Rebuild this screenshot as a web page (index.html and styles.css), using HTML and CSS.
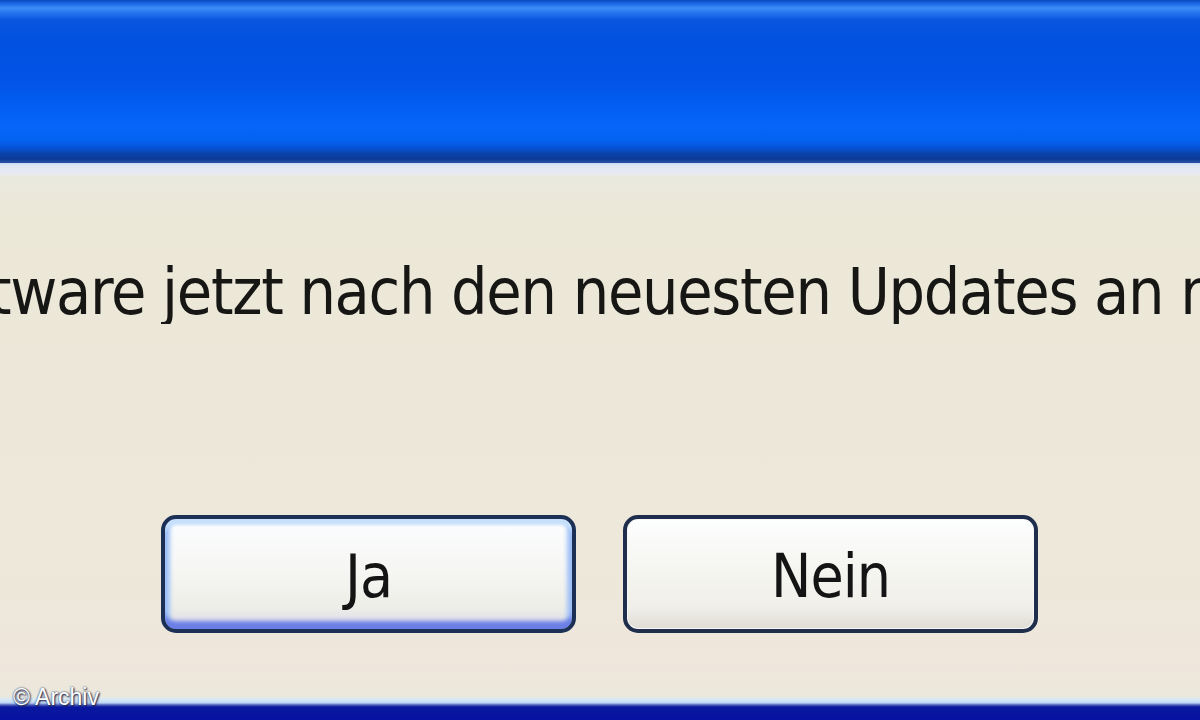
FILE: index.html
```html
<!DOCTYPE html>
<html lang="de">
<head>
<meta charset="utf-8">
<title>Dialog</title>
<link rel="stylesheet" href="styles.css">
</head>
<body>
<div class="window">
  <div class="titlebar"></div>
  <div class="content">
    <div class="message"><span class="msg-text">Software jetzt nach den neuesten Updates an meinem Computer suchen?</span></div>
    <div class="buttons">
      <button class="btn btn-default">Ja</button>
      <button class="btn">Nein</button>
    </div>
  </div>
  <div class="frame-bottom"></div>
  <div class="credit">© Archiv</div>
</div>
</body>
</html>
```

FILE: styles.css
```css
html, body {
  margin: 0;
  padding: 0;
  width: 1200px;
  height: 720px;
  overflow: hidden;
  background: #ede8da;
}

.window {
  position: relative;
  width: 1200px;
  height: 720px;
  display: flex;
  flex-direction: column;
  overflow: hidden;
}

.titlebar {
  height: 163px;
  flex: none;
  background: linear-gradient(to bottom,
    #0a48c0 0px,
    #1e6ae8 4px,
    #3c8ef8 8px,
    #2a78f0 12px,
    #0a56e0 20px,
    #0250e0 40px,
    #0254e6 80px,
    #035df2 105px,
    #0666fa 125px,
    #0462f2 140px,
    #0652d6 148px,
    #0a42a8 154px,
    #0c3a98 159px,
    #2a50a4 163px);
}

.content {
  flex: 1;
  display: flex;
  flex-direction: column;
  background: linear-gradient(to bottom,
    #c8d8f0 0px,
    #e0e6f6 3px,
    #e6e9f4 9px,
    #eae9de 14px,
    #ece8d8 60px,
    #ede8da 400px,
    #efe6dc 500px,
    #ebe8dc 100%);
}

.message {
  padding-top: 97px;
  overflow: hidden;
  white-space: nowrap;
  height: 64px;
}

.msg-text {
  display: inline-block;
  font-family: "DejaVu Sans Condensed", "DejaVu Sans", sans-serif;
  font-stretch: condensed;
  font-size: 64px;
  line-height: 64px;
  letter-spacing: -1.3px;
  color: #161614;
  margin-left: -98px;
}

.buttons {
  display: flex;
  gap: 47px;
  padding-left: 161px;
  margin-top: 191px;
}

.btn {
  box-sizing: border-box;
  width: 415px;
  height: 118px;
  border: 4px solid #1e2e4c;
  border-radius: 15px;
  background: linear-gradient(to bottom, #fdfeff 0%, #f6f6f2 40%, #f0efe9 80%, #dedcd4 100%);
  box-shadow: inset 0 0 0 1px #f8f8f6;
  font-family: "DejaVu Sans Condensed", "DejaVu Sans", sans-serif;
  font-stretch: condensed;
  font-size: 60px;
  letter-spacing: -1px;
  color: #141414;
  display: flex;
  align-items: center;
  justify-content: center;
  padding: 4px 0 0 0;
}

.btn-default {
  border-color: #1c3056;
  background: linear-gradient(to bottom, #fcfdff 0%, #f6f6f4 45%, #eeeee8 80%, #d8d8ea 100%);
  box-shadow:
    inset 0 7px 3px -1px #c6e0fc,
    inset 0 -10px 4px -2px #6a7ee6,
    inset 7px 0 4px -2px #9fc2f6,
    inset -7px 0 4px -2px #9fc2f6;
}

.frame-bottom {
  height: 23px;
  flex: none;
  background: linear-gradient(to bottom,
    #e4ecea 0px,
    #cfe4f6 4px,
    #b8d2f4 6px,
    #4c5cb8 8px,
    #0a18a0 10px,
    #0612a0 100%);
}

.credit {
  position: absolute;
  left: 13px;
  top: 686px;
  font-family: "Liberation Sans", Arial, sans-serif;
  font-size: 23px;
  line-height: 23px;
  color: #ffffff;
  text-shadow: 0 0 2px #202850, 1px 1px 2px #101840;
}
```
